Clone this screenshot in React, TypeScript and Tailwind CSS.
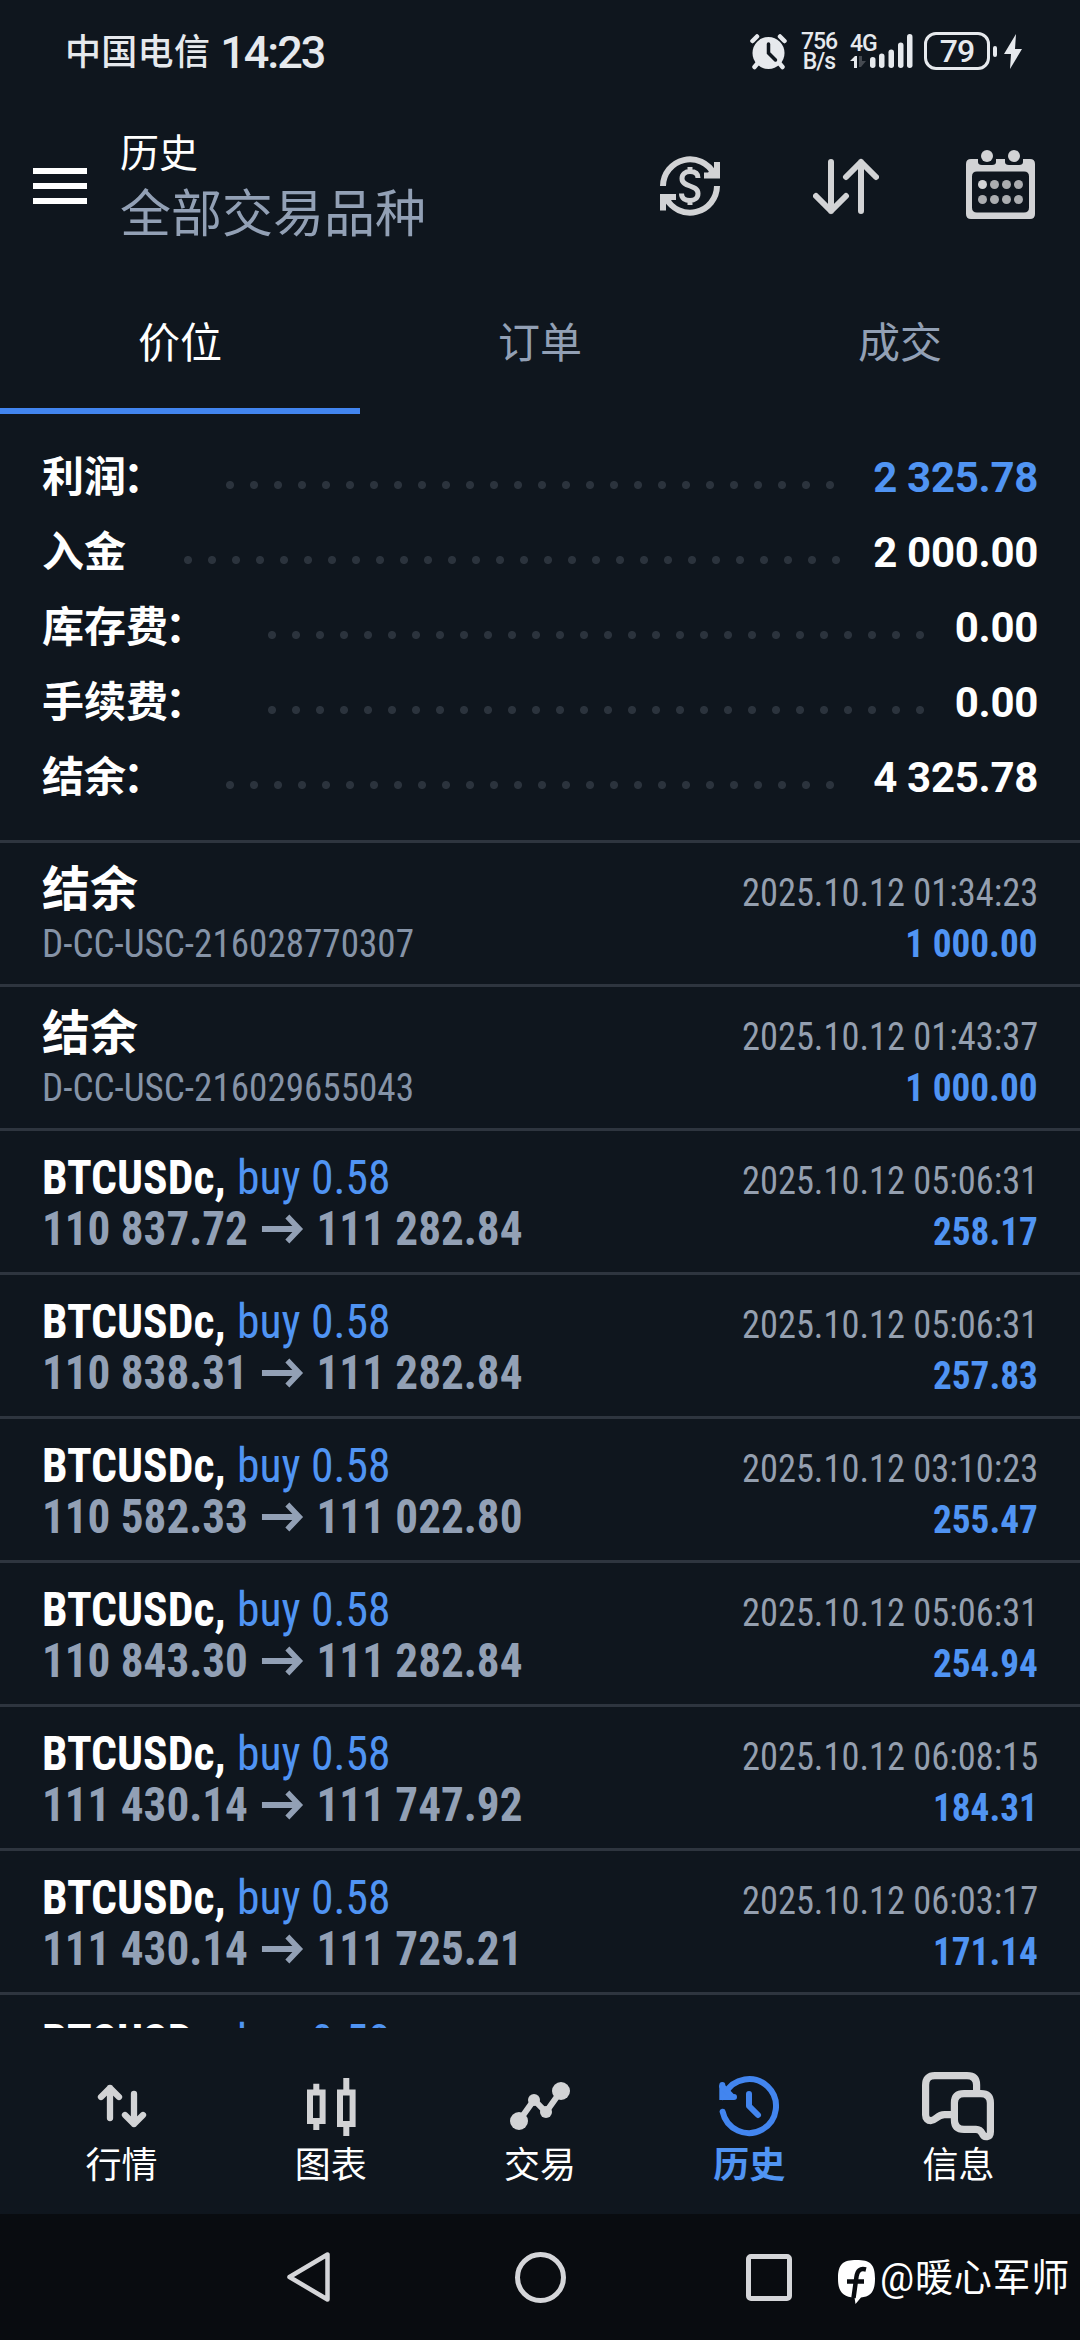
import type { ReactNode } from "react";

type Deal = {
  symbol: string;
  side: string;
  open: string;
  close: string;
  time: string;
  profit: string;
};

const summary = [
  { label: "利润", colon: true, value: "2 325.78", blue: true },
  { label: "入金", value: "2 000.00" },
  { label: "库存费", colon: true, value: "0.00" },
  { label: "手续费", colon: true, value: "0.00" },
  { label: "结余", colon: true, value: "4 325.78" },
];

const deposits = [
  { id: "D-CC-USC-216028770307", time: "2025.10.12 01:34:23", amount: "1 000.00" },
  { id: "D-CC-USC-216029655043", time: "2025.10.12 01:43:37", amount: "1 000.00" },
];

const deals: Deal[] = [
  { symbol: "BTCUSDc,", side: "buy 0.58", open: "110 837.72", close: "111 282.84", time: "2025.10.12 05:06:31", profit: "258.17" },
  { symbol: "BTCUSDc,", side: "buy 0.58", open: "110 838.31", close: "111 282.84", time: "2025.10.12 05:06:31", profit: "257.83" },
  { symbol: "BTCUSDc,", side: "buy 0.58", open: "110 582.33", close: "111 022.80", time: "2025.10.12 03:10:23", profit: "255.47" },
  { symbol: "BTCUSDc,", side: "buy 0.58", open: "110 843.30", close: "111 282.84", time: "2025.10.12 05:06:31", profit: "254.94" },
  { symbol: "BTCUSDc,", side: "buy 0.58", open: "111 430.14", close: "111 747.92", time: "2025.10.12 06:08:15", profit: "184.31" },
  { symbol: "BTCUSDc,", side: "buy 0.58", open: "111 430.14", close: "111 725.21", time: "2025.10.12 06:03:17", profit: "171.14" },
];

function StatusBar() {
  return (
    <div className="flex h-[102px] items-center pl-[65px] pr-[58px] text-[#e6e9ed]">
      <span className="mt-[3px] text-[36px] font-medium leading-none tracking-[0.3px]">中国电信</span>
      <span className="ml-[10px] mt-[3px] text-[45px] font-medium leading-none tracking-[-2px]">14:23</span>
      <div className="flex-1" />

      {/* Alarm */}
      <svg className="mt-[2px] h-[36px] w-[37px]" viewBox="0 0 37 36" fill="currentColor">
        <path d="M2.500 7l4.500-4.500M34.500 7L30 2.500M7 30l-2.500 3M30 30l2.500 3" stroke="currentColor" strokeWidth="4.500" strokeLinecap="round" />
        <circle cx="18.500" cy="19" r="16" />
        <path d="M18.500 10v9l7 7" fill="none" stroke="#0f161e" strokeWidth="3.500" strokeLinecap="round" />
      </svg>

      <div className="ml-[14px] mt-[2px] flex w-[36px] flex-col items-center text-[23px] font-medium leading-[20px] tracking-[-1px]">
        <span>756</span>
        <span>B/s</span>
      </div>

      <div className="ml-[13px] flex items-end">
        <div className="flex w-[20px] flex-col">
          <span className="text-[23px] font-medium leading-[20px] tracking-[-1px]">4G</span>
          <svg className="mt-[2px] h-[12px] w-[16px]" viewBox="0 0 16 12" fill="currentColor">
            <path d="M0 5L5 0h2v12H4V5z" />
            <path d="M9 0h3v5h4l-5 6H9z" opacity="0.25" />
          </svg>
        </div>
        <svg className="h-[34px] w-[43px]" viewBox="0 0 43 34" fill="currentColor">
          <rect x="0" y="23" width="5.500" height="11" rx="2.700" />
          <rect x="9" y="19.500" width="5.500" height="14.500" rx="2.700" />
          <rect x="18.500" y="15.500" width="5.500" height="18.500" rx="2.700" />
          <rect x="28" y="8.500" width="5.500" height="25.500" rx="2.700" />
          <rect x="37" y="0" width="5.500" height="34" rx="2.700" />
        </svg>
      </div>

      {/* Battery */}
      <div className="ml-[11px] flex h-[38px] w-[66px] items-center justify-center rounded-[12px] border-[3px] border-current text-[32px] font-medium leading-none tracking-[-1px]">
        79
      </div>
      <div className="ml-[3px] h-[11px] w-[4px] rounded-[2px] bg-current" />
      <svg className="ml-[7px] h-[35px] w-[18px]" viewBox="0 0 18 35" fill="currentColor">
        <path d="M12 0L0 20h7L6 35l12-20h-7z" />
      </svg>
    </div>
  );
}

function Header() {
  return (
    <div className="flex h-[156px] items-start pl-[33px] pr-[45px]">
      <div className="mt-[66px] flex w-[54px] flex-col gap-[9px]">
        <div className="h-[6px] bg-white" />
        <div className="h-[6px] bg-white" />
        <div className="h-[6px] bg-white" />
      </div>
      <div className="ml-[33px] mt-[28px] flex-1">
        <div className="text-[39px] leading-[48px] text-white">历史</div>
        <div className="mt-[5px] text-[51px] leading-[64px] text-[#92a0b5]">全部交易品种</div>
      </div>

      {/* Currency */}
      <svg className="mt-[54px] h-[60px] w-[60px] text-[#d2d3d5]" viewBox="0 0 60 60" fill="none" stroke="currentColor" strokeWidth="6">
        <path d="M3 30A27 27 0 0 1 54 18M57 30A27 27 0 0 1 6 42" />
        <path d="M44 19.500h13V6M16 41H3v13.500" />
        <path d="M49 15l8 4M11 45l-8-4" />
        <path d="M38 22c0-5-3.500-6.500-8-6.500s-8 2.500-8 7c0 9.500 16 5.500 16 15 0 4.500-3.500 7-8 7s-8.500-2-8.500-7M30 11v5M30 44v5" strokeWidth="5" />
      </svg>

      {/* Sort */}
      <svg className="ml-[93px] mt-[56px] h-[57px] w-[66px] text-[#d2d3d5]" viewBox="0 0 66 57" fill="none" stroke="currentColor" strokeWidth="6" strokeLinecap="round" strokeLinejoin="round">
        <path d="M18 4v49M3 38l15 15 15-15M48 53V4M33 19L48 4l15 15" />
      </svg>

      {/* Calendar */}
      <svg className="ml-[87px] mt-[48px] h-[69px] w-[69px] text-[#d2d3d5]" viewBox="0 0 69 69" fill="currentColor">
        <path fillRule="evenodd" d="M5 9h7v3q0 3 4 3h10q4 0 4-3V9h9v3q0 3 4 3h10q4 0 4-3V9h7q5 0 5 5v50q0 5-5 5H5q-5 0-5-5V14q0-5 5-5zM11 21.500q-5 0-5 5v31q0 5 5 5h47q5 0 5-5v-31q0-5-5-5z" />
        <circle cx="21" cy="6" r="6" />
        <circle cx="48" cy="6" r="6" />
        <circle cx="16.500" cy="34.500" r="4.500" />
        <g opacity="0.8">
          <circle cx="28.500" cy="34.500" r="4.500" />
          <circle cx="40.500" cy="34.500" r="4.500" />
          <circle cx="52.500" cy="34.500" r="4.500" />
          <circle cx="16.500" cy="49.500" r="4.500" />
          <circle cx="28.500" cy="49.500" r="4.500" />
          <circle cx="40.500" cy="49.500" r="4.500" />
          <circle cx="52.500" cy="49.500" r="4.500" />
        </g>
      </svg>
    </div>
  );
}

function Tabs() {
  return (
    <div className="flex h-[156px] text-center text-[42px] leading-[171px] text-[#92a0b5]">
      <div className="h-[156px] flex-1 border-b-[6px] border-[#4285ef] text-white">价位</div>
      <div className="flex-1">订单</div>
      <div className="flex-1">成交</div>
    </div>
  );
}

function Summary() {
  return (
    <div className="h-[426px] px-[42px] pt-[26px] text-[42px] font-bold leading-[75px] text-white">
      {summary.map((row) => (
        <div key={row.label} className="flex h-[75px] items-center">
          <span>{row.label}</span>
          {row.colon && <span className="-ml-[3px] mr-[3px]">：</span>}
          <div className="ml-[50px] mr-[24px] mt-[14px] h-[8px] flex-1 bg-[radial-gradient(circle,#2b333d_3.5px,transparent_4.5px)] bg-[length:24px_8px] bg-repeat-x" />
          <span className={`tracking-[-0.3px] ${row.blue ? "text-[#5094f3]" : ""}`}>{row.value}</span>
        </div>
      ))}
    </div>
  );
}

function HistoryRow({ title, detail, time, amount }: { title: ReactNode; detail?: ReactNode; time?: string; amount?: string }) {
  return (
    <div className="h-[144px] shrink-0 border-t-[3px] border-[#2e353f] px-[42px] pt-[21px] [font-stretch:75%]">
      <div className="flex h-[51px] items-start justify-between">
        <div className="text-[48px] leading-[51px]">{title}</div>
        <div className="origin-right scale-x-[0.934] text-[39px] leading-[59px] text-[#949faf]">{time}</div>
      </div>
      <div className="flex h-[51px] items-start justify-between">
        {detail}
        <div className="origin-right scale-x-[0.955] text-[39px] font-bold leading-[59px] text-[#5094f3]">{amount}</div>
      </div>
    </div>
  );
}

function DealTitle({ symbol, side }: { symbol: string; side: string }) {
  return (
    <div className="origin-left scale-x-[0.95]">
      <span className="font-bold text-white">{symbol}</span>
      <span className="ml-[12px] text-[#5094f3]">{side}</span>
    </div>
  );
}

function DealPrices({ open, close }: { open: string; close: string }) {
  return (
    <div className="flex origin-left scale-x-[0.94] items-center text-[48px] font-bold leading-[51px] text-[#92a0b5]">
      <span>{open}</span>
      <svg className="mx-[13.5px] h-[30px] w-[46px]" viewBox="0 0 46 30" fill="none" stroke="currentColor" strokeWidth="6">
        <path d="M1 15h40M28 2.500L40.500 15 28 27.500" />
      </svg>
      <span>{close}</span>
    </div>
  );
}

function NavItem({ label, active, children }: { label: string; active?: boolean; children: ReactNode }) {
  return (
    <div className={`flex flex-1 flex-col items-center ${active ? "font-bold text-[#4285ef]" : "text-[#d2d3d5]"}`}>
      <svg className="h-[72px] w-[72px]" viewBox="0 0 24 24" fill="none" stroke="currentColor" strokeWidth="2">
        {children}
      </svg>
      <span className={`text-[36px] leading-[49px] ${active ? "text-[#5094f3]" : "text-white"}`}>{label}</span>
    </div>
  );
}

function BottomNav() {
  return (
    <div className="flex h-[186px] px-[17px] pt-[42px]">
      <NavItem label="行情">
        <path d="M8 16V6M5 9l3-3 3 3M16 8v10M13 15l3 3 3-3" strokeWidth="2.100" strokeLinecap="round" strokeLinejoin="round" />
      </NavItem>
      <NavItem label="图表">
        <path d="M5 7.500h4.200V17H5zM7.100 4.600v2.900M7.100 17v3M15 7.500h4.200V18H15zM17.100 2.700v4.800M17.100 18v4" />
      </NavItem>
      <NavItem label="交易">
        <path d="M5 17l5-7 4 4 5-7" />
        <g fill="currentColor" stroke="none">
          <circle cx="5" cy="17" r="3" />
          <circle cx="10" cy="10" r="2" />
          <circle cx="14" cy="14" r="2" />
          <circle cx="19" cy="7" r="3" />
        </g>
      </NavItem>
      <NavItem label="历史" active>
        <path d="M3.200 13.900A9 9 0 1 0 4 7.900L3.200 9M3.100 5v4h3.900" strokeLinecap="round" />
        <path d="M3.100 5.500L6 8.500M12 8v4l3 3" strokeLinecap="round" strokeLinejoin="round" />
      </NavItem>
      <NavItem label="信息">
        <path d="M10.500 14.900H7.500C5 14.900 4.500 16.900 2.900 16.900 2 16.900 1.200 16.200 1.200 15V5Q1.200 1.900 4.300 1.900H15Q18.200 1.900 18.200 5V7.500" strokeWidth="2.400" />
        <path d="M14 7.900H19.600Q22.800 7.900 22.800 11V20.600C22.800 22.600 20.700 22.700 20.100 21.200 19.600 20.200 18.800 19.800 18 19.800H14Q10.800 19.800 10.800 16.600V11Q10.800 7.900 14 7.900z" strokeWidth="2.400" />
      </NavItem>
    </div>
  );
}

function SystemNav() {
  return (
    <div className="flex h-[126px] items-center bg-[#090c10] pl-[286px] text-[#d5d6d9]">
      <svg className="h-[52px] w-[45px]" viewBox="0 0 45 52" fill="none" stroke="currentColor" strokeWidth="4.500" strokeLinejoin="round">
        <path d="M41.500 3.500v45L3.500 26z" />
      </svg>
      <div className="ml-[184px] h-[51px] w-[51px] rounded-full border-[5px] border-current" />
      <div className="ml-[180px] h-[47px] w-[46px] rounded-[5px] border-[5px] border-current" />
      <svg className="ml-[46px] mt-[9px] h-[44px] w-[37px]" viewBox="0 0 37 44">
        <path d="M18.500 0C32 0 37 4 37 18.500c0 13-4 18-14 19L17.500 44l-1-6.500C5 37 0 32 0 18.500 0 4 5 0 18.500 0z" fill="#fff" />
        <path d="M28 9.500c-6-1.500-8.500 1-9.500 7L15.500 38M9 21.500h17" fill="none" stroke="#090c10" strokeWidth="4.500" />
      </svg>
      <span className="ml-[5px] mt-[2px] whitespace-nowrap text-[38px] leading-none tracking-[0.8px] text-white">@暖心军师</span>
    </div>
  );
}

export default function App() {
  return (
    <div className="flex h-[2340px] w-[1080px] flex-col overflow-hidden bg-[#0f161e] font-[Roboto,'Noto_Sans_CJK_SC',sans-serif]">
      <StatusBar />
      <Header />
      <Tabs />
      <Summary />

      {/* History list, the last row is cut by the bottom bar */}
      <div className="flex h-[1188px] flex-col overflow-hidden">
        {deposits.map((d) => (
          <HistoryRow
            key={d.id}
            title={<span className="font-bold text-white">结余</span>}
            detail={<div className="origin-left scale-x-[0.952] text-[39px] leading-[59px] text-[#8593a7]">{d.id}</div>}
            time={d.time}
            amount={d.amount}
          />
        ))}
        {deals.map((d) => (
          <HistoryRow
            key={d.open + d.close}
            title={<DealTitle symbol={d.symbol} side={d.side} />}
            detail={<DealPrices open={d.open} close={d.close} />}
            time={d.time}
            amount={d.profit}
          />
        ))}
        <HistoryRow title={<DealTitle symbol="BTCUSDc," side="buy 0.58" />} />
      </div>

      <BottomNav />
      <SystemNav />
    </div>
  );
}
